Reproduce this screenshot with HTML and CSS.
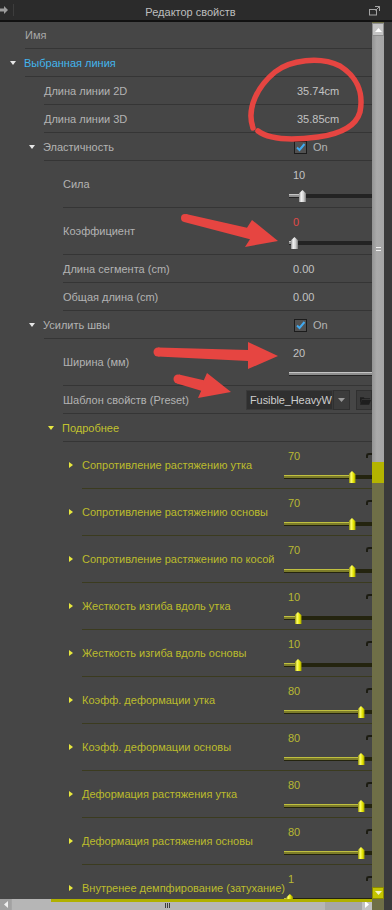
FILE: index.html
```html
<!DOCTYPE html>
<html lang="ru">
<head>
    <meta charset="UTF-8">
    <meta name="viewport" content="width=device-width, initial-scale=1.0">
    <title>Редактор свойств</title>
    <link rel="stylesheet" href="styles.css">
</head>
<body>
<div class="panel">
    <div class="head">
        <div class="head-left">
            <svg class="pin" width="8" height="8" viewBox="0 0 8 8"><path d="M0 2.5h4V0l4 4-4 4V5.5H0z" fill="#9c9c9c"/></svg>
            <span class="head-sep"></span>
        </div>
        <div class="title">Редактор свойств</div>
        <div class="head-right">
            <svg width="12" height="10" viewBox="0 0 12 10">
                <rect x="0.5" y="3.5" width="7" height="5.5" fill="none" stroke="#a4a4a4"/>
                <path d="M6 0.5h4.5V5M10.5 0.5L6.5 4.5" fill="none" stroke="#a4a4a4"/>
            </svg>
        </div>
    </div>

    <div class="body">
        <div class="list">
            <div class="row first l0"><span class="name dim">Имя</span></div>
            <div class="row l0"><span class="tw down"></span><span class="name blue">Выбранная линия</span></div>
            <div class="row l1"><span class="name">Длина линии 2D</span><span class="val wide">35.74cm</span></div>
            <div class="row l1"><span class="name">Длина линии 3D</span><span class="val wide">35.85cm</span></div>
            <div class="row l1">
                <span class="tw down"></span><span class="name">Эластичность</span>
                <span class="val check"><span class="box"><svg width="11" height="11" viewBox="0 0 11 11"><path d="M2 5.5l2.5 2.5 5-6" fill="none" stroke="#41a9ef" stroke-width="2"/></svg></span>On</span>
            </div>
            <div class="row tall l2">
                <span class="name">Сила</span>
                <span class="val stack">
                    <span class="vline">10</span>
                    <span class="slider">
                        <span class="track"></span>
                        <span class="fill" style="width: 13px"></span>
                        <span class="knob" style="left: 10px"></span>
                    </span>
                </span>
            </div>
            <div class="row tall l2">
                <span class="name">Коэффициент</span>
                <span class="val stack">
                    <span class="vline red">0</span>
                    <span class="slider">
                        <span class="track"></span>
                        <span class="fill" style="width: 5px"></span>
                        <span class="knob" style="left: 2px"></span>
                    </span>
                </span>
            </div>
            <div class="row l2"><span class="name">Длина сегмента (cm)</span><span class="val">0.00</span></div>
            <div class="row l2"><span class="name">Общая длина (cm)</span><span class="val">0.00</span></div>
            <div class="row l1">
                <span class="tw down"></span><span class="name">Усилить швы</span>
                <span class="val check"><span class="box"><svg width="11" height="11" viewBox="0 0 11 11"><path d="M2 5.5l2.5 2.5 5-6" fill="none" stroke="#41a9ef" stroke-width="2"/></svg></span>On</span>
            </div>
            <div class="row tall l2">
                <span class="name">Ширина (мм)</span>
                <span class="val stack">
                    <span class="vline">20</span>
                    <span class="slider">
                        <span class="track"></span>
                        <span class="fill" style="width: 100%"></span>
                    </span>
                </span>
            </div>
            <div class="row l2">
                <span class="name">Шаблон свойств (Preset)</span>
                <span class="preset">
                    <span class="combo">Fusible_HeavyW</span>
                    <span class="combo-btn"><svg width="7" height="4" viewBox="0 0 7 4"><path d="M0 0h7L3.5 4z" fill="#9a9a9a"/></svg></span>
                    <span class="folder-btn"><svg width="12" height="9" viewBox="0 0 12 9"><path d="M0 1h4l1 1h6v1H2L0 8z M2 4h10l-2 5H0z" fill="#1e1e1e"/></svg></span>
                </span>
            </div>
            <div class="row l2"><span class="tw down hot"></span><span class="name yellow">Подробнее</span></div>

            <div class="row tall l3 d">
                <span class="tw right"></span><span class="name">Сопротивление растяжению утка</span>
                <span class="val stack">
                    <span class="vline">70<span class="reset"></span></span>
                    <span class="slider"><span class="track"></span><span class="fill" style="width: 68px"></span><span class="knob" style="left: 64.5px"></span></span>
                </span>
            </div>
            <div class="row tall l3 d">
                <span class="tw right"></span><span class="name">Сопротивление растяжению основы</span>
                <span class="val stack">
                    <span class="vline">70<span class="reset"></span></span>
                    <span class="slider"><span class="track"></span><span class="fill" style="width: 68px"></span><span class="knob" style="left: 64.5px"></span></span>
                </span>
            </div>
            <div class="row tall l3 d">
                <span class="tw right"></span><span class="name">Сопротивление растяжению по косой</span>
                <span class="val stack">
                    <span class="vline">70<span class="reset"></span></span>
                    <span class="slider"><span class="track"></span><span class="fill" style="width: 68px"></span><span class="knob" style="left: 64.5px"></span></span>
                </span>
            </div>
            <div class="row tall l3 d">
                <span class="tw right"></span><span class="name">Жесткость изгиба вдоль утка</span>
                <span class="val stack">
                    <span class="vline">10<span class="reset"></span></span>
                    <span class="slider"><span class="track"></span><span class="fill" style="width: 14px"></span><span class="knob" style="left: 10.5px"></span></span>
                </span>
            </div>
            <div class="row tall l3 d">
                <span class="tw right"></span><span class="name">Жесткость изгиба вдоль основы</span>
                <span class="val stack">
                    <span class="vline">10<span class="reset"></span></span>
                    <span class="slider"><span class="track"></span><span class="fill" style="width: 14px"></span><span class="knob" style="left: 10.5px"></span></span>
                </span>
            </div>
            <div class="row tall l3 d">
                <span class="tw right"></span><span class="name">Коэфф. деформации утка</span>
                <span class="val stack">
                    <span class="vline">80<span class="reset"></span></span>
                    <span class="slider"><span class="track"></span><span class="fill" style="width: 77px"></span><span class="knob" style="left: 73.5px"></span></span>
                </span>
            </div>
            <div class="row tall l3 d">
                <span class="tw right"></span><span class="name">Коэфф. деформации основы</span>
                <span class="val stack">
                    <span class="vline">80<span class="reset"></span></span>
                    <span class="slider"><span class="track"></span><span class="fill" style="width: 77px"></span><span class="knob" style="left: 73.5px"></span></span>
                </span>
            </div>
            <div class="row tall l3 d">
                <span class="tw right"></span><span class="name">Деформация растяжения утка</span>
                <span class="val stack">
                    <span class="vline">80<span class="reset"></span></span>
                    <span class="slider"><span class="track"></span><span class="fill" style="width: 77px"></span><span class="knob" style="left: 73.5px"></span></span>
                </span>
            </div>
            <div class="row tall l3 d">
                <span class="tw right"></span><span class="name">Деформация растяжения основы</span>
                <span class="val stack">
                    <span class="vline">80<span class="reset"></span></span>
                    <span class="slider"><span class="track"></span><span class="fill" style="width: 77px"></span><span class="knob" style="left: 73.5px"></span></span>
                </span>
            </div>
            <div class="row tall l3 d">
                <span class="tw right"></span><span class="name">Внутренее демпфирование (затухание)</span>
                <span class="val stack">
                    <span class="vline">1<span class="reset"></span></span>
                    <span class="slider"><span class="track"></span><span class="fill" style="width: 6px"></span><span class="knob" style="left: 2.4px"></span></span>
                </span>
            </div>
        </div>

        <div class="vscroll">
            <div class="vbtn"><svg width="7" height="4" viewBox="0 0 7 4"><path d="M0 4h7L3.5 0z" fill="#fff"/></svg></div>
            <div class="vthumb"><span class="grip"></span></div>
            <div class="vthumb-hot"></div>
            <div class="vtrack"></div>
            <div class="vbtn hot"><svg width="7" height="4" viewBox="0 0 7 4"><path d="M0 0h7L3.5 4z" fill="#f4f4c0"/></svg></div>
        </div>
        <div class="gutter"></div>

        <div class="hscroll">
            <div class="hbtn"><svg width="4" height="7" viewBox="0 0 4 7"><path d="M4 0v7L0 3.5z" fill="#f0f0f0"/></svg></div>
            <div class="hthumb"><span class="hgrip"></span></div>
            <div class="htrack"></div>
            <div class="hbtn end"><svg width="4" height="7" viewBox="0 0 4 7"><path d="M0 0v7L4 3.5z" fill="#fff"/></svg></div>
            <div class="hline"></div>
        </div>
        <div class="corner"></div>
    </div>

    <svg class="marks" width="392" height="910" viewBox="0 0 392 910">
        <path d="M253 128 C246 108 258 86 275 72 C290 60 320 56 340 66 C356 76 364 92 360 112 C356 126 340 134 318 137 C295 140 270 140 258 131" fill="none" stroke="#e64541" stroke-width="5.5" stroke-linecap="round"/>
        <circle cx="185" cy="218" r="4" fill="#e64541"/>
        <polygon points="186,214 247,227.7 252,220 278,241 245,247 250,239.3 184,222" fill="#e64541"/>
        <circle cx="158" cy="352" r="4.5" fill="#e64541"/>
        <polygon points="158,347.5 248,350 248,342 278,356 248,369 248,361 158,356.5" fill="#e64541"/>
        <circle cx="178" cy="379" r="4.5" fill="#e64541"/>
        <polygon points="179,374.6 203.8,380.2 207,373 231,392 198,398 201.2,390.8 177,383.4" fill="#e64541"/>
    </svg>
</div>
</body>
</html>
```

FILE: styles.css
```css
body {
    margin: 0;
    background-color: #464646;
    font-family: "Liberation Sans", Arial, sans-serif;
    font-size: 11px;
}
.panel {
    position: relative;
    width: 392px;
    height: 910px;
    overflow: hidden;
    background-color: #464646;
    color: #b3b3b3;
}

/* заголовок панели */
.head {
    height: 20px;
    background-color: #2b2b2b;
    border-bottom: 2px solid #121212;
    display: grid;
    grid-template-columns: 20px 1fr 31px;
    align-items: center;
}
.head-left {
    display: flex;
    align-items: center;
}
.head-sep {
    width: 1px;
    height: 12px;
    margin-left: 5px;
    background-color: #3d3d3d;
}
.title {
    text-align: center;
    color: #bebebe;
    font-size: 11px;
    padding-top: 3px;
}
.head-right {
    padding-left: 8px;
    padding-top: 2px;
    display: flex;
}

/* основная область */
.body {
    display: grid;
    grid-template-columns: 372px 12px 8px;
    grid-template-rows: 877px 11px;
}
.list {
    overflow: hidden;
}
.row {
    display: flex;
    align-items: center;
    height: 27px;
    border-bottom: 1px solid #353535;
    white-space: nowrap;
}
.row.first {
    height: 26px;
}
.row.tall {
    height: 46px;
}
.l0 { margin-left: 25px; }
.l1 { margin-left: 44px; }
.l2 { margin-left: 63px; }
.l3 { margin-left: 82px; }

.name {
    flex: 1 1 auto;
    min-width: 0;
}
.dim { color: #a9a9a9; }
.blue { color: #43b5ee; }
.yellow { color: #c2c22e; }

.tw {
    flex: none;
    width: 0;
    height: 0;
}
.tw.down {
    margin-left: -15px;
    margin-right: 8px;
    border-left: 3.5px solid transparent;
    border-right: 3.5px solid transparent;
    border-top: 4px solid #e6e6e6;
    margin-top: 1px;
}
.tw.down.hot {
    border-top-color: #e6e640;
}
.tw.right {
    margin-left: -13px;
    margin-right: 9px;
    border-top: 3.5px solid transparent;
    border-bottom: 3.5px solid transparent;
    border-left: 4px solid #e8e83e;
}

.val {
    flex: none;
    width: 83px;
    padding-left: 4px;
    box-sizing: border-box;
    color: #c2c2c2;
}
.val.wide {
    padding-left: 8px;
}
.val.check {
    padding-left: 5px;
    display: flex;
    align-items: center;
    gap: 6px;
    color: #b3b3b3;
    margin-top: 1px;
}
.box {
    width: 13px;
    height: 13px;
    box-sizing: border-box;
    border: 1px solid #1c1c1c;
    background-color: #515151;
    display: flex;
    align-items: center;
    justify-content: center;
}
.val.stack {
    align-self: stretch;
    display: flex;
    flex-direction: column;
    padding-top: 7px;
}
.vline {
    display: flex;
    justify-content: space-between;
    height: 14px;
    line-height: 14px;
}
.red { color: #e04a48; }

/* ползунки */
.slider {
    position: relative;
    height: 21px;
    margin-left: -4px;
}
.track {
    position: absolute;
    left: 0;
    right: -10px;
    top: 12px;
    height: 4px;
    background-color: #232323;
}
.fill {
    position: absolute;
    left: 0;
    top: 12px;
    height: 3px;
    background: linear-gradient(#c4c4c4 0 1px, #8e8e8e 1px);
}
.knob {
    position: absolute;
    top: 8px;
    width: 7px;
    height: 12px;
    clip-path: polygon(50% 0, 100% 28%, 100% 100%, 0 100%, 0 28%);
    background: linear-gradient(to right, #8c8c8c, #f4f4f4 30%, #d0d0d0 65%, #7a7a7a);
}

/* раздел «Подробнее» */
.d {
    border-bottom-color: #3b3b1f;
}
.d .name {
    color: #bcbc2c;
}
.d .val {
    width: 88px;
    color: #b8b832;
}
.d .track {
    background-color: #24240f;
}
.d .fill {
    background: linear-gradient(#c0c040 0 1px, #7c7c2a 1px);
}
.d .knob {
    background: linear-gradient(to right, #8a8a00, #ffff70 30%, #e2e200 65%, #8f8f00);
}
.reset {
    width: 4px;
    height: 3px;
    margin-top: 4px;
    border-top: 2px solid #1c1c12;
    border-left: 2px solid #1c1c12;
    border-radius: 3px 0 0 0;
}

/* шаблон */
.preset {
    flex: none;
    width: 126px;
    height: 20px;
    display: flex;
    margin-top: 1px;
}
.combo {
    width: 88px;
    box-sizing: border-box;
    padding-left: 3px;
    line-height: 19px;
    background-color: #2f2f2f;
    border: 1px solid #3a3a3a;
    color: #cdcdcd;
    font-size: 11px;
    letter-spacing: -0.1px;
    overflow: hidden;
}
.combo-btn {
    width: 17px;
    background-color: #3c3c3c;
    border: 1px solid #303030;
    box-sizing: border-box;
    display: flex;
    align-items: center;
    justify-content: center;
}
.folder-btn {
    width: 16px;
    margin-left: 6px;
    background-color: #3c3c3c;
    border: 1px solid #303030;
    box-sizing: border-box;
    display: flex;
    align-items: center;
    justify-content: flex-start;
    padding-left: 3px;
}

/* вертикальная прокрутка */
.vscroll {
    display: flex;
    flex-direction: column;
    background-color: #6f6f47;
}
.vbtn {
    height: 13px;
    margin-top: 1px;
    background-color: #c4c4c4;
    border: 1px solid #8e8e8e;
    box-sizing: border-box;
    display: flex;
    align-items: center;
    justify-content: center;
}
.vbtn.hot {
    height: 12px;
    margin-top: 0;
    background-color: #c4c400;
    border-color: #8c8c00;
}
.vthumb {
    height: 426px;
    background: linear-gradient(to right, #939393, #aaaaaa 40%, #a5a5a5);
    display: flex;
    align-items: center;
    justify-content: center;
}
.grip {
    width: 5px;
    height: 2px;
    border-top: 1px solid #f0f0f0;
    border-bottom: 1px solid #f0f0f0;
}
.vthumb-hot {
    height: 21px;
    background-color: #b4b400;
}
.vtrack {
    flex: 1;
    background-color: #6f6f47;
}
.gutter {
    grid-column: 3;
    grid-row: 1 / 3;
    background-color: #3a3a3a;
}

/* горизонтальная прокрутка */
.hscroll {
    position: relative;
    display: flex;
    background-color: #a6a6a6;
}
.hbtn {
    width: 11px;
    background-color: #a2a2a2;
    display: flex;
    align-items: center;
    justify-content: center;
}
.hbtn.end {
    width: 10px;
    background-color: #c2c2c2;
}
.hthumb {
    width: 313px;
    margin-left: 1px;
    background-color: #b6b6b6;
    display: flex;
    align-items: center;
}
.hgrip {
    margin-left: 153px;
    width: 1px;
    height: 5px;
    margin-top: 2px;
    background-color: #3c3c3c;
    box-shadow: 2px 0 #3c3c3c, 4px 0 #3c3c3c;
}
.htrack {
    flex: 1;
}
.hline {
    position: absolute;
    left: 51px;
    right: 0;
    top: 0;
    height: 3px;
    background-color: #b0b000;
}
.corner {
    background-color: #6f6f47;
}

/* пометки поверх */
.marks {
    position: absolute;
    left: 0;
    top: 0;
    pointer-events: none;
}
```
